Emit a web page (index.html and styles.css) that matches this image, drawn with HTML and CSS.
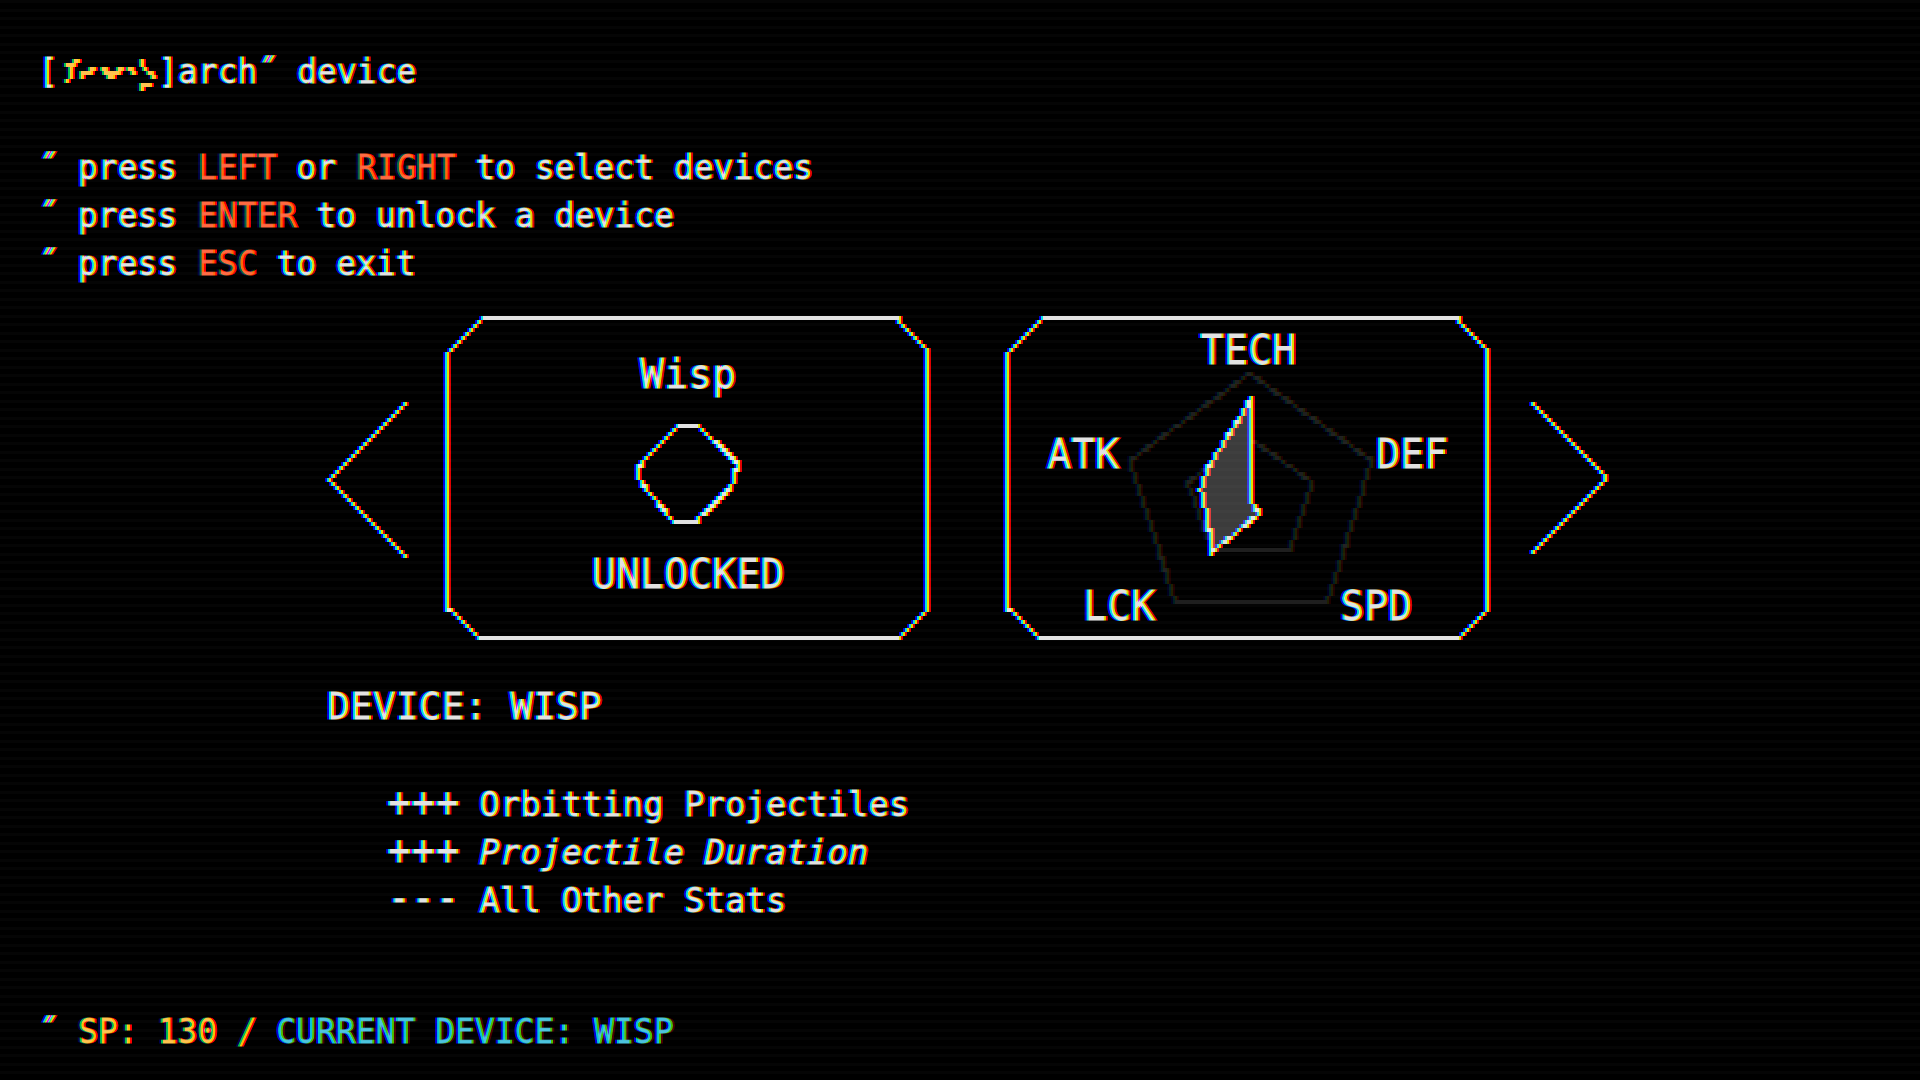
FILE: index.html
```html
<!DOCTYPE html>
<html lang="en">
<head>
<meta charset="utf-8">
<title>arch~ device</title>
<meta name="viewport" content="width=device-width, initial-scale=1">
<link rel="stylesheet" href="styles.css">
</head>
<body>
<svg class="defs" width="0" height="0" aria-hidden="true">
  <defs>
    <!-- Splits red and blue to either side, like a misaligned CRT -->
    <filter id="chroma" x="0" y="0" width="100%" height="100%" color-interpolation-filters="sRGB">
      <feColorMatrix in="SourceGraphic" values="1 0 0 0 0  0 0 0 0 0  0 0 0 0 0  0 0 0 1 0"/>
      <feOffset dx="2" result="red"/>
      <feColorMatrix in="SourceGraphic" values="0 0 0 0 0  0 1 0 0 0  0 0 0 0 0  0 0 0 1 0" result="green"/>
      <feColorMatrix in="SourceGraphic" values="0 0 0 0 0  0 0 0 0 0  0 0 1 0 0  0 0 0 1 0"/>
      <feOffset dx="-2" result="blue"/>
      <feComposite in="red" in2="green" operator="arithmetic" k2="1" k3="1" result="rg"/>
      <feComposite in="rg" in2="blue" operator="arithmetic" k2="1" k3="1"/>
    </filter>
    <!-- Snaps line art to 4px blocks -->
    <filter id="blocks" filterUnits="userSpaceOnUse" x="-8" y="-8" width="520" height="352" color-interpolation-filters="sRGB">
      <feFlood x="1" y="1" width="1" height="1" flood-color="#fff" result="dot"/>
      <feOffset in="dot" x="0" y="0" width="4" height="4" dx="0" dy="0" result="cell"/>
      <feTile in="cell" result="grid"/>
      <feComposite in="SourceGraphic" in2="grid" operator="in"/>
      <feMorphology operator="dilate" radius="1" result="b0"/>
      <feOffset in="b0" dx="1" dy="0" result="b1"/>
      <feOffset in="b0" dx="0" dy="1" result="b2"/>
      <feOffset in="b0" dx="1" dy="1" result="b3"/>
      <feMerge>
        <feMergeNode in="b3"/><feMergeNode in="b2"/><feMergeNode in="b1"/><feMergeNode in="b0"/>
      </feMerge>
    </filter>
  </defs>
</svg>

<main class="screen">
  <h1 class="prompt">[<svg class="glitch" viewBox="4 0 100 36" role="img" aria-label="scrambled name">
    <path d="M18 4h8v4h-8zM10 8h12v4H10zM14 12h5v4h-5zM34 12h8v4h-8zM46 12h8v4h-8zM62 12h8v4h-8zM72 12h8v4h-8zM14 16h5v8h-5zM25 16h14v4H25zM48 16h19v4H48zM76 16h6v4h-6zM25 20h5v4h-5zM52 20h9v4h-9zM10 24h5v4h-5zM85 4h5v8h-5zM88 12h5v4h-5zM92 16h8v4h-8zM96 20h6v4h-6zM85 28h13v4H85zM85 32h5v4h-5z"/>
  </svg>]arch˝ device</h1>

  <ul class="help">
    <li>˝ press <kbd>LEFT</kbd> or <kbd>RIGHT</kbd> to select devices</li>
    <li>˝ press <kbd>ENTER</kbd> to unlock a device</li>
    <li>˝ press <kbd>ESC</kbd> to exit</li>
  </ul>

  <div class="browser">
    <div class="picker">
      <button class="arrow" type="button" aria-label="Previous device">
        <svg viewBox="0 0 82 160"><g class="blocks"><path class="line" d="M80 3L2 81V82L78 158"/></g></svg>
      </button>
      <div class="cards">
        <section class="card">
          <svg class="frame" viewBox="0 0 486 324" aria-hidden="true"><g class="blocks"><path class="line" d="M36 2H452L482 34V294L454 322H34L2 292V36Z"/></g></svg>
          <div class="device">
            <h2>Wisp</h2>
            <svg class="sprite" viewBox="0 0 104 100" role="img" aria-label="Wisp"><g class="blocks"><path class="line" d="M42 2H62L102 39L98 50L94 63L62 94V98H38L6 60L2 54V44L6 38Z"/></g></svg>
            <p>UNLOCKED</p>
          </div>
        </section>
        <section class="card">
          <svg class="frame" viewBox="0 0 486 324" role="img" aria-label="Device stats">
            <g class="blocks">
              <path class="web" d="M244 57L366 144L322 286H170L124 144ZM244 122L307 166L284 234H207L182 166Z"/>
            </g>
            <g class="blocks">
              <path class="area" d="M246 82V184L254 197L206 236L202 200L195 174L202 152Z"/>
            </g>
            <g class="blocks">
              <path class="line" d="M36 2H452L482 34V294L454 322H34L2 292V36Z"/>
            </g>
            <g class="labels">
              <text x="243" y="48">TECH</text>
              <text x="78" y="152">ATK</text>
              <text x="407" y="152">DEF</text>
              <text x="114" y="304">LCK</text>
              <text x="371" y="304">SPD</text>
            </g>
          </svg>
        </section>
      </div>
      <button class="arrow" type="button" aria-label="Next device">
        <svg viewBox="0 0 82 160"><g class="blocks"><path class="line" d="M2 2L79 79V80L2 157"/></g></svg>
      </button>
    </div>

    <h2 class="name">DEVICE: WISP</h2>
    <ul class="traits">
      <li><span class="rank">+++</span> <span>Orbitting Projectiles</span></li>
      <li><span class="rank">+++</span> <em>Projectile Duration</em></li>
      <li><span class="rank">---</span> <span>All Other Stats</span></li>
    </ul>
  </div>

  <footer class="status">˝ <span class="points">SP: 130 /</span> <span class="current">CURRENT DEVICE: WISP</span></footer>
</main>
</body>
</html>
```
FILE: styles.css
```css
:root {
  --ink: #e2e2e2;
  --key: #ff6a42;
  --gold: #ffc24f;
  --cyan: #4cc4de;
}

* {
  box-sizing: border-box;
  margin: 0;
  padding: 0;
}

body {
  background: #000;
  color: var(--ink);
  font: 33px/48px "DejaVu Sans Mono", monospace;
  -webkit-text-stroke: 1px;
}

/* Scan lines over the whole screen */
body::after {
  content: "";
  position: fixed;
  inset: 0;
  pointer-events: none;
  background: repeating-linear-gradient(
    rgba(255, 255, 255, 0.02) 0 3px,
    transparent 3px 9px,
    rgba(255, 255, 255, 0.02) 9px 12px,
    transparent 12px 17px
  );
}

.defs {
  position: absolute;
}

.screen {
  display: flex;
  flex-direction: column;
  min-height: 100vh;
  padding: 48px 38px 24px;
  background: #000;
  filter: url(#chroma);
}

h1,
h2 {
  font-size: inherit;
  font-weight: normal;
}

ul {
  list-style: none;
}

.prompt {
  margin-bottom: 48px;
}

.glitch {
  width: 100px;
  height: 36px;
  vertical-align: -8px;
  fill: var(--gold);
  shape-rendering: crispEdges;
}

kbd {
  font: inherit;
  color: var(--key);
}

.browser {
  max-width: 1571px;
  margin-top: 28px;
  padding-left: 289px;
}

.picker {
  display: flex;
  align-items: center;
  gap: 36px;
}

.arrow {
  flex: 0 0 82px;
  border: 0;
  background: none;
  cursor: pointer;
}

svg {
  overflow: visible;
}

.arrow svg,
.frame {
  display: block;
  width: 100%;
}

.blocks {
  filter: url(#blocks);
}

.line,
.web,
.area {
  fill: none;
  stroke: var(--ink);
  stroke-width: 3px;
  shape-rendering: crispEdges;
}

.web,
.area,
.sprite .line {
  stroke-width: 4px;
}

.web {
  stroke: #1f1f1f;
}

.area {
  fill: #3c3c3c;
}

.cards {
  flex: 1;
  display: grid;
  grid-template-columns: 1fr 1fr;
  gap: 74px;
}

.card {
  display: grid;
  font-size: 40px;
}

.frame,
.device {
  grid-area: 1 / 1;
}

.device {
  display: flex;
  flex-direction: column;
  align-items: center;
  gap: 26px;
  padding-top: 34px;
}

.sprite {
  width: 104px;
  height: 100px;
}

.labels {
  fill: var(--ink);
  stroke: var(--ink);
  stroke-width: 1px;
  text-anchor: middle;
}

.name {
  margin: 42px 0 48px;
  font-size: 38px;
}

.traits {
  padding-left: 60px;
  font-size: 34px;
}

.traits li {
  display: flex;
  align-items: baseline;
  gap: 20px;
  height: 48px;
}

.rank {
  font-size: 40px;
}

.status {
  margin-top: auto;
}

.points {
  color: var(--gold);
}

.current {
  color: var(--cyan);
}
```
